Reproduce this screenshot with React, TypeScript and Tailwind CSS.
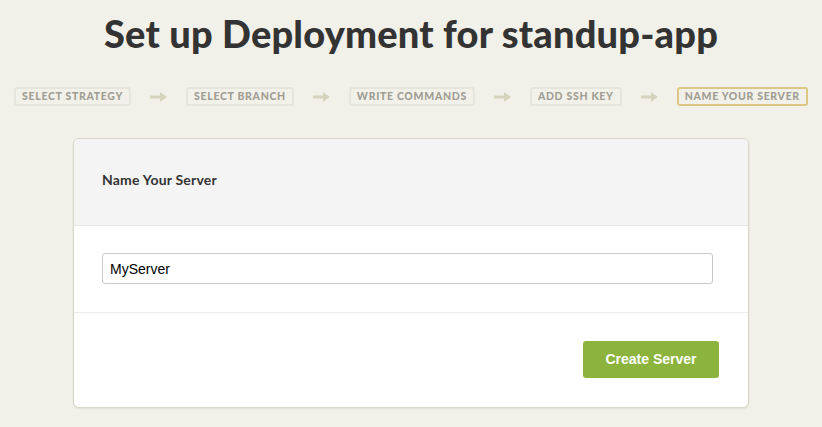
import React from "react";

const steps = ["SELECT STRATEGY", "SELECT BRANCH", "WRITE COMMANDS", "ADD SSH KEY", "NAME YOUR SERVER"];

function Arrow() {
  return (
    <svg width="17" height="10" viewBox="0 0 17 10" className="shrink-0">
      <path d="M0 3.5 H10 V0 L17 5 L10 10 V6.5 H0 Z" fill="#d5d4bc" />
    </svg>
  );
}

export default function App() {
  return (
    <div className="min-h-[427px] w-full bg-[#f2f1e9] flex flex-col items-center overflow-hidden" style={{ fontFamily: "Lato, 'Open Sans', sans-serif" }}>
      <h1 className="mt-[10px] text-[38px] leading-[46px] font-black text-[#333333] tracking-[0.2px]">
        Set up Deployment for standup-app
      </h1>
      <div className="mt-[31px] flex items-center gap-[19px]">
        {steps.map((s, i) => (
          <React.Fragment key={s}>
            {i > 0 && <Arrow />}
            <div
              className={
                "h-[19px] px-[6px] flex items-center rounded-[3px] border-2 text-[10.5px] font-black tracking-[0.065em] text-[#a09e94] " +
                (i === steps.length - 1 ? "border-[#dcc884]" : "border-[#e6e5dc]")
              }
            >
              {s}
            </div>
          </React.Fragment>
        ))}
      </div>
      <div className="mt-[32px] w-[676px] rounded-[6px] border border-[#d7d5c6] bg-white shadow-[0_1px_2px_rgba(0,0,0,0.08)] overflow-hidden">
        <div className="h-[87px] bg-[#f4f4f4] border-b border-[#e8e8e8] flex items-center px-[28px] pb-[6px]">
          <span className="text-[14px] font-bold text-[#333333] tracking-[0.2px]">Name Your Server</span>
        </div>
        <div className="pt-[27px] pb-[28px] pl-[28px] border-b border-[#ececec]">
          <input
            defaultValue="MyServer"
            className="w-[611px] h-[31px] rounded-[3px] border border-[#c9c9c9] px-[7px] text-[14px] text-black outline-none"
            style={{ fontFamily: "'Liberation Sans', Arial, sans-serif" }}
          />
        </div>
        <div className="pt-[28px] pb-[29px] pr-[29px] flex justify-end">
          <button
            className="w-[136px] h-[37px] rounded-[3px] bg-[#8cb43c] text-white text-[14px] font-bold"
            style={{ fontFamily: "'Liberation Sans', Arial, sans-serif" }}
          >
            Create Server
          </button>
        </div>
      </div>
    </div>
  );
}
